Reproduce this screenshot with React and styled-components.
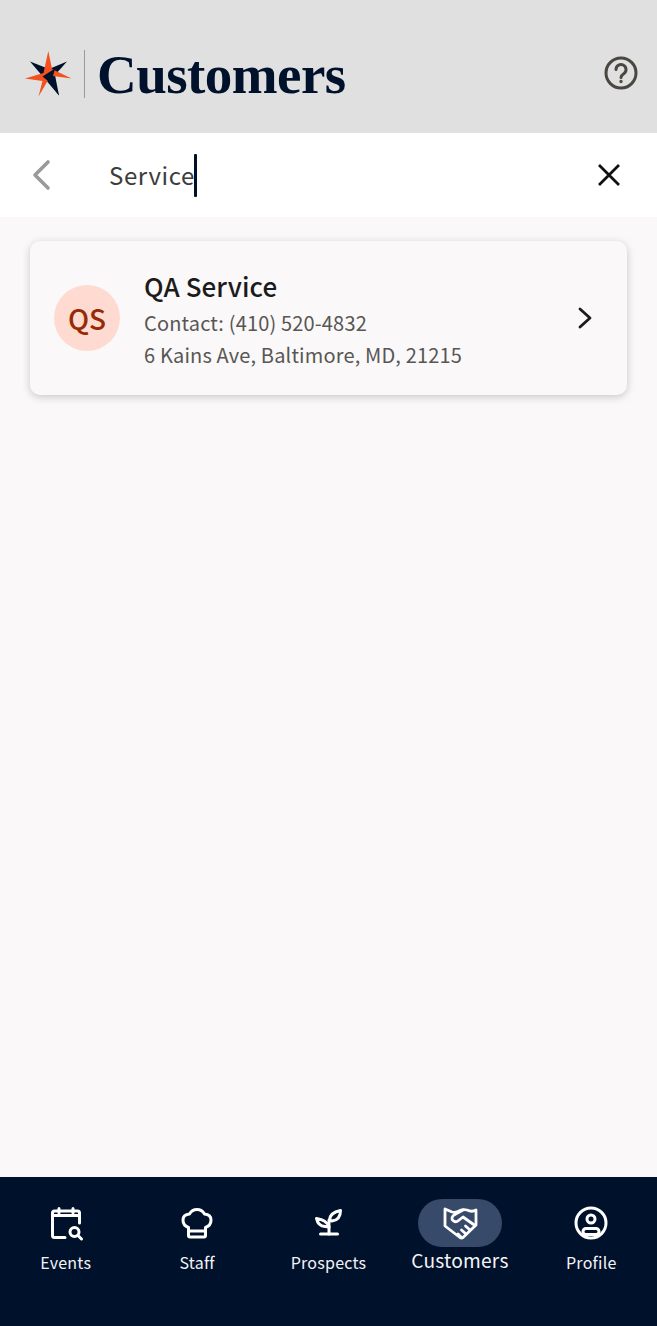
import React from 'react';
import styled, { createGlobalStyle } from 'styled-components';

const Global = createGlobalStyle`
  html, body { margin: 0; padding: 0; height: 100%; }
  body { background: #faf8f9; font-family: "Noto Sans CJK SC", "Noto Sans", sans-serif; }
  #root { height: 100%; }
`;

const Screen = styled.div`
  display: flex;
  flex-direction: column;
  height: 1326px;
  background: #faf8f9;
`;

const Header = styled.header`
  display: flex;
  align-items: center;
  justify-content: space-between;
  height: 133px;
  padding: 14px 18px 0 25px;
  box-sizing: border-box;
  background: #e0e0e0;
`;

const Brand = styled.div`
  display: flex;
  align-items: center;
`;

const Divider = styled.div`
  width: 1px;
  height: 48px;
  margin: 0 12px 0 11px;
  background: #9a9a9a;
`;

const Title = styled.h1`
  margin: 3px 0 0;
  font-family: "Liberation Serif", serif;
  font-size: 55px;
  line-height: 56px;
  font-weight: 700;
  letter-spacing: -0.55px;
  color: #00112b;
`;

const HelpWrap = styled.div`
  display: flex;
  margin-top: -2px;
`;

const SearchBar = styled.div`
  display: flex;
  align-items: center;
  height: 84px;
  padding: 0 36px 0 31px;
  box-sizing: border-box;
  background: #fff;
`;

const IconButton = styled.button`
  display: flex;
  padding: 0;
  border: 0;
  background: none;
`;

const Query = styled.div`
  flex: 1;
  display: flex;
  align-items: center;
  padding: 0 0 0 56px;
  font-size: 24px;
  line-height: 36px;
  letter-spacing: 0.6px;
  color: #3c3c3c;
`;

const Caret = styled.span`
  width: 3px;
  height: 43px;
  margin-left: -1px;
  border-radius: 1px;
  background: #00112b;
`;

const Results = styled.main`
  flex: 1;
  padding: 24px 30px;
`;

const Card = styled.div`
  display: flex;
  align-items: center;
  height: 154px;
  padding: 0 34px 0 24px;
  box-sizing: border-box;
  border-radius: 10px;
  background: #faf8f9;
  box-shadow: 0 2px 8px rgba(0, 0, 0, 0.2);
`;

const Avatar = styled.div`
  display: flex;
  align-items: center;
  justify-content: center;
  flex: none;
  width: 66px;
  height: 66px;
  margin-right: 24px;
  border-radius: 50%;
  background: #ffdad1;
  color: #952a05;
  font-size: 28px;
  font-weight: 500;
`;

const Info = styled.div`
  flex: 1;
  padding-top: 3px;
`;

const Name = styled.div`
  margin-bottom: 4px;
  font-size: 26px;
  line-height: 34px;
  font-weight: 500;
  color: #1c1b1b;
  letter-spacing: 0.1px;
`;

const Line = styled.div`
  font-size: 20px;
  line-height: 32px;
  color: #585653;
  letter-spacing: 0.16px;
`;

const Nav = styled.nav`
  display: grid;
  grid-template-columns: repeat(5, 1fr);
  height: 149px;
  padding-top: 22px;
  box-sizing: border-box;
  background: #00112b;
`;

const NavItem = styled.div`
  display: flex;
  flex-direction: column;
  align-items: center;
  color: #fff;
`;

const Pill = styled.div`
  display: flex;
  align-items: center;
  justify-content: center;
  width: 84px;
  height: 48px;
  border-radius: 24px;
  background: ${(p) => (p.$active ? '#374a69' : 'transparent')};
`;

const NavLabel = styled.span`
  margin-top: ${(p) => (p.$active ? '0' : '1px')};
  font-size: ${(p) => (p.$active ? '19.2px' : '16px')};
  line-height: ${(p) => (p.$active ? '26px' : '28px')};
  letter-spacing: ${(p) => (p.$active ? '0.2px' : '0.25px')};
  color: #f4f4f6;
`;

const StarLogo = () => (
  <svg width="48" height="48" viewBox="24 49 48 48">
    <path fill="#00112b" d="M29 60.5 L48 68 L66 60.5 L54 74 L58 94.5 L46.5 81 Z" />
    <path fill="#f4511e" d="M47.3 50 L51 68 L70.5 77.5 L52 75 L46 81 L37.5 95.5 L41.5 80 L24 77.5 L42.5 72 Z" />
    <path fill="#00112b" d="M54 67.5 L52 75 L58 94.5 L47 80 L41.5 75.5 Z" />
  </svg>
);

const HelpIcon = () => (
  <svg width="36" height="36" viewBox="0 0 36 36" fill="none" stroke="#4a4640" strokeWidth="3" strokeLinecap="round">
    <circle cx="18" cy="18" r="15" />
    <path d="M13 14.5 a5 5 0 1 1 8 4 c-2 1.4 -3 2.2 -3 4" />
    <circle cx="18" cy="26.5" r="0.7" strokeWidth="2" />
  </svg>
);

const BackIcon = () => (
  <svg width="22" height="32" viewBox="0 0 22 32" fill="none" stroke="#9a9a9a" strokeWidth="3.6" strokeLinecap="round" strokeLinejoin="round">
    <path d="M17 3 L4 16 L17 29" />
  </svg>
);

const CloseIcon = () => (
  <svg width="24" height="24" viewBox="0 0 24 24" fill="none" stroke="#111" strokeWidth="2.8">
    <path d="M2 2 L22 22 M22 2 L2 22" />
  </svg>
);

const Chevron = () => (
  <svg width="16" height="24" viewBox="0 0 16 24" fill="none" stroke="#1c1b1b" strokeWidth="2.8" strokeLinecap="round" strokeLinejoin="round">
    <path d="M3 3 L13 12 L3 21" />
  </svg>
);

const navStroke = { fill: 'none', stroke: '#fff', strokeWidth: 3, strokeLinecap: 'round', strokeLinejoin: 'round' };

const EventsIcon = () => (
  <svg width="36" height="36" viewBox="0 0 36 36" {...navStroke}>
    <path d="M17 32.500 H6.500 Q4.500 32.500 4.500 30.500 V8 Q4.500 6 6.500 6 H29.500 Q31.500 6 31.500 8 V18" />
    <path d="M4.500 10.500 H31.500 M11 3.500 V8 M25 3.500 V8" />
    <circle cx="26.500" cy="27" r="4.500" />
    <path d="M30 30.500 L33.500 34" />
  </svg>
);

const StaffIcon = () => (
  <svg width="36" height="36" viewBox="0 0 36 36" {...navStroke}>
    <path d="M11 32 H25 Q26.500 32 26.500 30.500 V22.500 Q32 20.500 32 15 Q32 9.500 25.500 9 Q23 4.500 18 4.500 Q13 4.500 10.500 9 Q4 9.500 4 15 Q4 20.500 9.500 22.500 V30.500 Q9.500 32 11 32 Z" />
    <path d="M9.500 26 H26.500" />
  </svg>
);

const ProspectsIcon = () => (
  <svg width="36" height="36" viewBox="0 0 36 36" {...navStroke}>
    <path d="M10.500 29 H27.500" />
    <path d="M19 29 V15" />
    <path d="M19.500 15 Q20 7.500 30.500 5.500 Q30.500 15 22 16 Z" />
    <path d="M19 22 Q17 15 6.500 13.500 Q8 21 15 21.500 Z" />
  </svg>
);

const CustomersIcon = () => (
  <svg width="36" height="36" viewBox="0 0 36 36" {...navStroke} strokeWidth="2.8">
    <path d="M3 4 L10 7 Q14 8 18 5.500 Q21 4 25 5 Q30 7.500 34 5 L34 20 L21 32.500 Q19.500 33.500 18 32.500 L3 21 Z" />
    <path d="M21 5 L12 10 Q8.500 13 11 15.500 Q13.500 18 16.500 15.500 L21 12 L33 20.500" />
    <path d="M28 25 L23.500 21 M24 29 L19.500 25 M19.500 32.500 L16 29" />
  </svg>
);

const ProfileIcon = () => (
  <svg width="36" height="36" viewBox="0 0 36 36" {...navStroke}>
    <circle cx="18" cy="18" r="15" />
    <circle cx="18" cy="14" r="4" />
    <rect x="10" y="23.500" width="16" height="6" rx="3" />
  </svg>
);

const navItems = [
  { label: 'Events', Icon: EventsIcon },
  { label: 'Staff', Icon: StaffIcon },
  { label: 'Prospects', Icon: ProspectsIcon },
  { label: 'Customers', Icon: CustomersIcon, active: true },
  { label: 'Profile', Icon: ProfileIcon },
];

export default function App() {
  return (
    <Screen>
      <Global />
      <Header>
        <Brand>
          <StarLogo />
          <Divider />
          <Title>Customers</Title>
        </Brand>
        <HelpWrap><HelpIcon /></HelpWrap>
      </Header>
      <SearchBar>
        <IconButton><BackIcon /></IconButton>
        <Query>Service<Caret /></Query>
        <IconButton><CloseIcon /></IconButton>
      </SearchBar>
      <Results>
        <Card>
          <Avatar>QS</Avatar>
          <Info>
            <Name>QA Service</Name>
            <Line>Contact: (410) 520-4832</Line>
            <Line>6 Kains Ave, Baltimore, MD, 21215</Line>
          </Info>
          <Chevron />
        </Card>
      </Results>
      <Nav>
        {navItems.map(({ label, Icon, active }) => (
          <NavItem key={label}>
            <Pill $active={active}><Icon /></Pill>
            <NavLabel $active={active}>{label}</NavLabel>
          </NavItem>
        ))}
      </Nav>
    </Screen>
  );
}
